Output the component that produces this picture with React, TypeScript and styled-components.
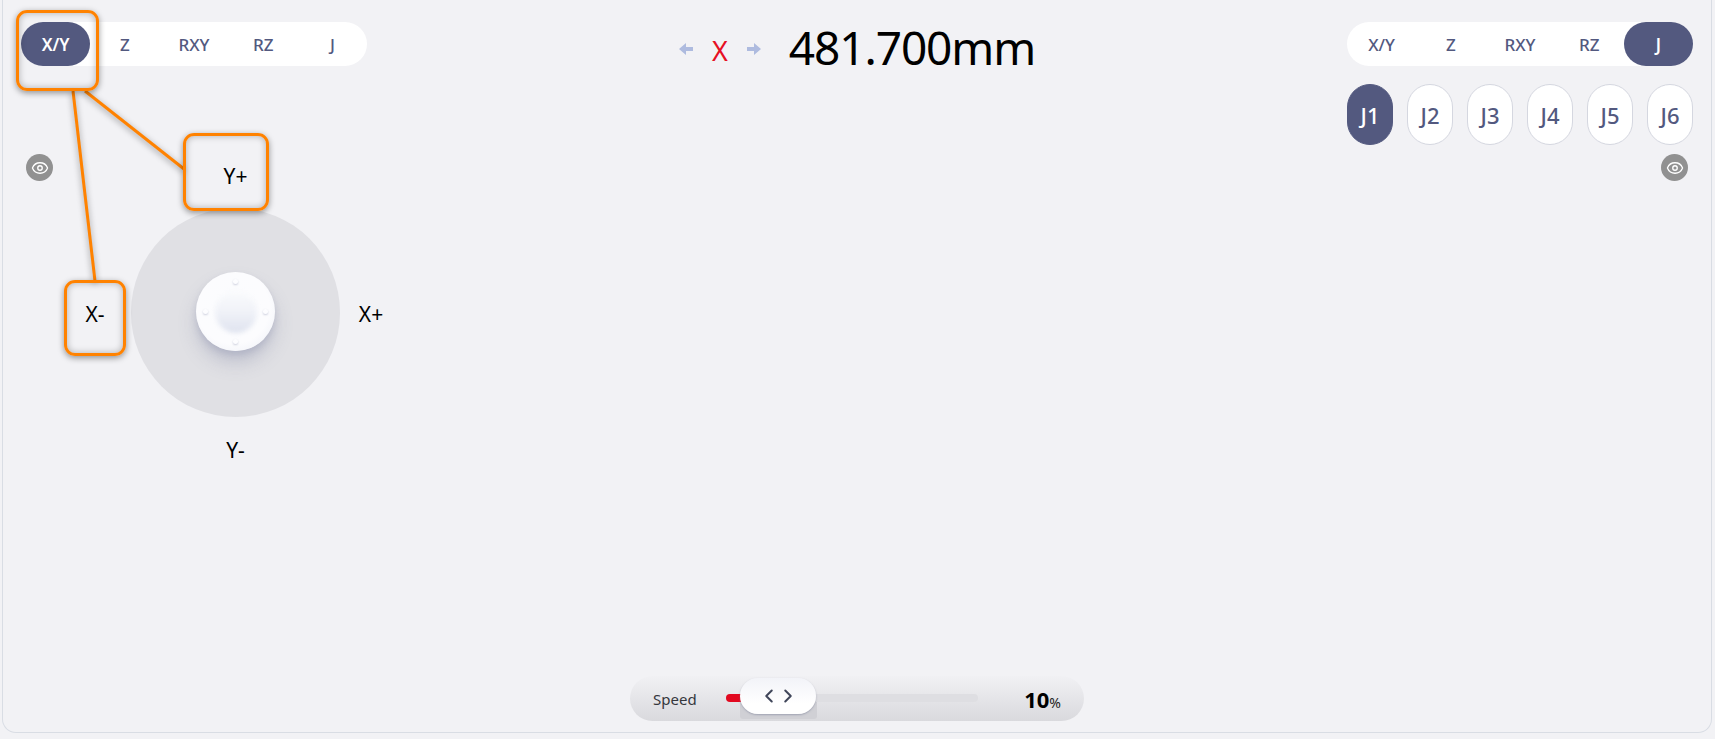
import React from "react";
import styled, { createGlobalStyle } from "styled-components";
import { Eye, ChevronLeft, ChevronRight } from "lucide-react";

const FONT = `"Noto Sans", "Open Sans", "Liberation Sans", sans-serif`;
const INK = "#53597f";

const GlobalStyle = createGlobalStyle`
  html, body {
    margin: 0;
    padding: 0;
    background: #f2f2f5;
    overflow: hidden;
  }
  body {
    font-family: ${FONT};
  }
`;

const Page = styled.div`
  position: relative;
  width: 1715px;
  height: 739px;
  padding-left: 2px;
  box-sizing: border-box;
`;

const Panel = styled.div`
  display: flex;
  flex-direction: column;
  box-sizing: border-box;
  width: 1710px;
  height: 733px;
  padding: 22px 18px 11px;
  border: 1px solid #d9dde4;
  border-top: none;
  border-radius: 0 0 14px 14px;
`;

const Main = styled.div`
  flex: 1;
  display: grid;
  grid-template-columns: 1fr auto 1fr;
`;

const LeftColumn = styled.div`
  display: flex;
  flex-direction: column;
  align-items: flex-start;
`;

const RightColumn = styled.div`
  display: flex;
  flex-direction: column;
  align-items: flex-end;
`;

const Tabs = styled.div`
  display: grid;
  grid-template-columns: repeat(5, 1fr);
  width: 346px;
  height: 44px;
  border-radius: 22px;
  background: #ffffff;
`;

const Tab = styled.div<{ $active?: boolean }>`
  display: flex;
  align-items: center;
  justify-content: center;
  border-radius: 22px;
  font-size: 17px;
  font-weight: ${(p) => (p.$active ? 600 : 500)};
  color: ${(p) => (p.$active ? "#ffffff" : INK)};
  background: ${(p) => (p.$active ? INK : "transparent")};
`;

const JointRow = styled.div`
  display: flex;
  gap: 14px;
  margin-top: 18px;
`;

const Joint = styled.div<{ $active?: boolean }>`
  display: flex;
  align-items: center;
  justify-content: center;
  box-sizing: border-box;
  width: 46px;
  height: 61px;
  border-radius: 23px;
  border: 1px solid ${(p) => (p.$active ? INK : "#d5d7e0")};
  background: ${(p) => (p.$active ? INK : "#ffffff")};
  color: ${(p) => (p.$active ? "#ffffff" : INK)};
  font-size: 22px;
  font-weight: 500;
`;

const EyeBadge = styled.div`
  display: flex;
  align-items: center;
  justify-content: center;
  width: 27px;
  height: 27px;
  border-radius: 50%;
  background: #919191;
  color: #ffffff;
`;

const LeftEye = styled(EyeBadge)`
  margin: 2px 6px 0 5px;
  flex: none;
`;

const RightEye = styled(EyeBadge)`
  margin: 9px 5px 0 0;
`;

const JogRow = styled.div`
  display: flex;
  align-items: flex-start;
  margin-top: 86px;
`;

const Stick = styled.div`
  display: grid;
  grid-template-columns: 72px 209px 62px;
  grid-template-rows: 54px 209px 64px;
  margin-top: 2px;
`;

const AxisLabel = styled.div<{ $col: number; $row: number }>`
  grid-column: ${(p) => p.$col};
  grid-row: ${(p) => p.$row};
  display: flex;
  align-items: center;
  justify-content: center;
  padding-top: 2px;
  font-size: 21px;
  color: #000000;
`;

const TopLabel = styled(AxisLabel)`
  align-items: flex-start;
  padding-top: 8px;
`;

const Pad = styled.div`
  grid-column: 2;
  grid-row: 2;
  display: flex;
  align-items: center;
  justify-content: center;
  width: 209px;
  height: 209px;
  border-radius: 50%;
  background: #e0e0e4;
`;

const Knob = styled.div`
  position: relative;
  display: flex;
  align-items: center;
  justify-content: center;
  width: 79px;
  height: 79px;
  margin-top: -2px;
  border-radius: 50%;
  background: radial-gradient(circle at 47% 45%, #fbfcfe 0%, #fcfcfe 60%, #f0f2f8 85%, #e7eaf3 100%);
  box-shadow: 0 12px 18px rgba(120, 125, 160, 0.3), 0 4px 6px rgba(120, 125, 160, 0.22);
`;

const Dimple = styled.div`
  width: 42px;
  height: 42px;
  border-radius: 50%;
  background: linear-gradient(180deg, #fafbfd 0%, #f0f2f8 50%, #dfe3ef 100%);
  filter: blur(2px);
`;

const Dot = styled.span<{ $x: number; $y: number }>`
  position: absolute;
  left: ${(p) => p.$x}px;
  top: ${(p) => p.$y}px;
  width: 5px;
  height: 5px;
  border-radius: 50%;
  background: #fdfdff;
  box-shadow: 0 1px 2px rgba(130, 135, 170, 0.4);
`;

const Readout = styled.div`
  display: flex;
  align-items: center;
  height: 54px;
`;

const Arrow = styled.svg`
  width: 14px;
  height: 12px;
  fill: #aebbdf;
`;

const AxisName = styled.span`
  margin: 2px 19px 0;
  width: 16px;
  font-size: 27px;
  color: #e60f23;
  text-align: center;
`;

const Value = styled.span`
  margin: -4px 0 0 28px;
  font-size: 46px;
  letter-spacing: -1.1px;
  line-height: 54px;
  color: #000000;
`;

const SpeedRow = styled.div`
  display: flex;
  justify-content: center;
`;

const SpeedBar = styled.div`
  display: flex;
  align-items: center;
  box-sizing: border-box;
  width: 454px;
  height: 45px;
  padding: 0 23px;
  border-radius: 23px;
  background: linear-gradient(180deg, #f1f1f4 0%, #d9d9dd 100%);
  isolation: isolate;
`;

const SpeedLabel = styled.span`
  width: 73px;
  font-size: 15px;
  color: #35373d;
`;

const Track = styled.div`
  position: relative;
  width: 252px;
  height: 8px;
  margin-top: -2px;
  border-radius: 4px;
  background: #dedee2;
`;

const TrackFill = styled.div`
  height: 8px;
  border-radius: 4px 0 0 4px;
  background: #e2081f;
`;

const Thumb = styled.div`
  position: absolute;
  left: 14px;
  top: -16px;
  display: flex;
  align-items: center;
  justify-content: center;
  gap: 0;
  width: 76px;
  height: 36px;
  border-radius: 18px;
  background: linear-gradient(180deg, #f2f3f8 0%, #ffffff 70%);
  box-shadow: 0 1px 2px rgba(120, 125, 150, 0.55);
  color: #40465a;

  &::before {
    content: "";
    position: absolute;
    z-index: -1;
    left: 0;
    right: -1px;
    top: 18px;
    bottom: -5px;
    border-radius: 0 0 3px 3px;
    background: #d0d0d5;
  }

  svg {
    margin: 0 -1.5px;
  }
`;

const SpeedValue = styled.span`
  margin-left: auto;
  color: #000000;
  font-size: 22px;
  font-weight: 700;
`;

const Percent = styled.span`
  font-size: 14px;
  font-weight: 400;
  color: #222222;
`;

const Note = styled.div<{ $x: number; $y: number; $w: number; $h: number }>`
  position: absolute;
  left: ${(p) => p.$x}px;
  top: ${(p) => p.$y}px;
  width: ${(p) => p.$w}px;
  height: ${(p) => p.$h}px;
  box-sizing: border-box;
  border: 3px solid #ff8200;
  border-radius: 11px;
  box-shadow: 0 2px 6px rgba(0, 0, 0, 0.4), inset 0 0 7px rgba(0, 0, 0, 0.28);
  pointer-events: none;
`;

const NoteLines = styled.svg`
  position: absolute;
  left: 0;
  top: 0;
  width: 400px;
  height: 300px;
  overflow: visible;
  pointer-events: none;
  filter: drop-shadow(0 2px 3px rgba(0, 0, 0, 0.4));
`;

const tabNames = ["X/Y", "Z", "RXY", "RZ", "J"];
const joints = ["J1", "J2", "J3", "J4", "J5", "J6"];

const TabBar = ({ active }: { active: string }) => (
  <Tabs>
    {tabNames.map((t) => (
      <Tab key={t} $active={t === active}>
        {t}
      </Tab>
    ))}
  </Tabs>
);

export default function App() {
  return (
    <Page>
      <GlobalStyle />
      <Panel>
        <Main>
          <LeftColumn>
            <TabBar active="X/Y" />
            <JogRow>
              <LeftEye>
                <Eye size={18} strokeWidth={1.8} />
              </LeftEye>
              <Stick>
                <TopLabel $col={2} $row={1}>Y+</TopLabel>
                <AxisLabel $col={1} $row={2}>X-</AxisLabel>
                <Pad>
                  <Knob>
                    <Dimple />
                    <Dot $x={37} $y={7} />
                    <Dot $x={37} $y={67} />
                    <Dot $x={7} $y={37} />
                    <Dot $x={67} $y={37} />
                  </Knob>
                </Pad>
                <AxisLabel $col={3} $row={2}>X+</AxisLabel>
                <AxisLabel $col={2} $row={3}>Y-</AxisLabel>
              </Stick>
            </JogRow>
          </LeftColumn>

          <Readout>
            <Arrow viewBox="0 0 14 12">
              <path d="M0 6 7 0v4h7v4H7v4z" />
            </Arrow>
            <AxisName>X</AxisName>
            <Arrow viewBox="0 0 14 12">
              <path d="M14 6 7 0v4H0v4h7v4z" />
            </Arrow>
            <Value>481.700mm</Value>
          </Readout>

          <RightColumn>
            <TabBar active="J" />
            <JointRow>
              {joints.map((j) => (
                <Joint key={j} $active={j === "J1"}>
                  {j}
                </Joint>
              ))}
            </JointRow>
            <RightEye>
              <Eye size={18} strokeWidth={1.8} />
            </RightEye>
          </RightColumn>
        </Main>

        <SpeedRow>
          <SpeedBar>
            <SpeedLabel>Speed</SpeedLabel>
            <Track>
              <TrackFill style={{ width: `${(16 / 252) * 100}%` }} />
              <Thumb>
                <ChevronLeft size={22} strokeWidth={2.2} />
                <ChevronRight size={22} strokeWidth={2.2} />
              </Thumb>
            </Track>
            <SpeedValue>
              10<Percent>%</Percent>
            </SpeedValue>
          </SpeedBar>
        </SpeedRow>
      </Panel>

      <NoteLines viewBox="0 0 400 300">
        <g stroke="#ff8200" strokeWidth="3" fill="none">
          <line x1="73" y1="91" x2="95" y2="281" />
          <line x1="85" y1="91" x2="184" y2="169" />
        </g>
      </NoteLines>
      <Note $x={16} $y={10} $w={83} $h={81} />
      <Note $x={183} $y={133} $w={86} $h={78} />
      <Note $x={64} $y={280} $w={62} $h={76} />
    </Page>
  );
}
